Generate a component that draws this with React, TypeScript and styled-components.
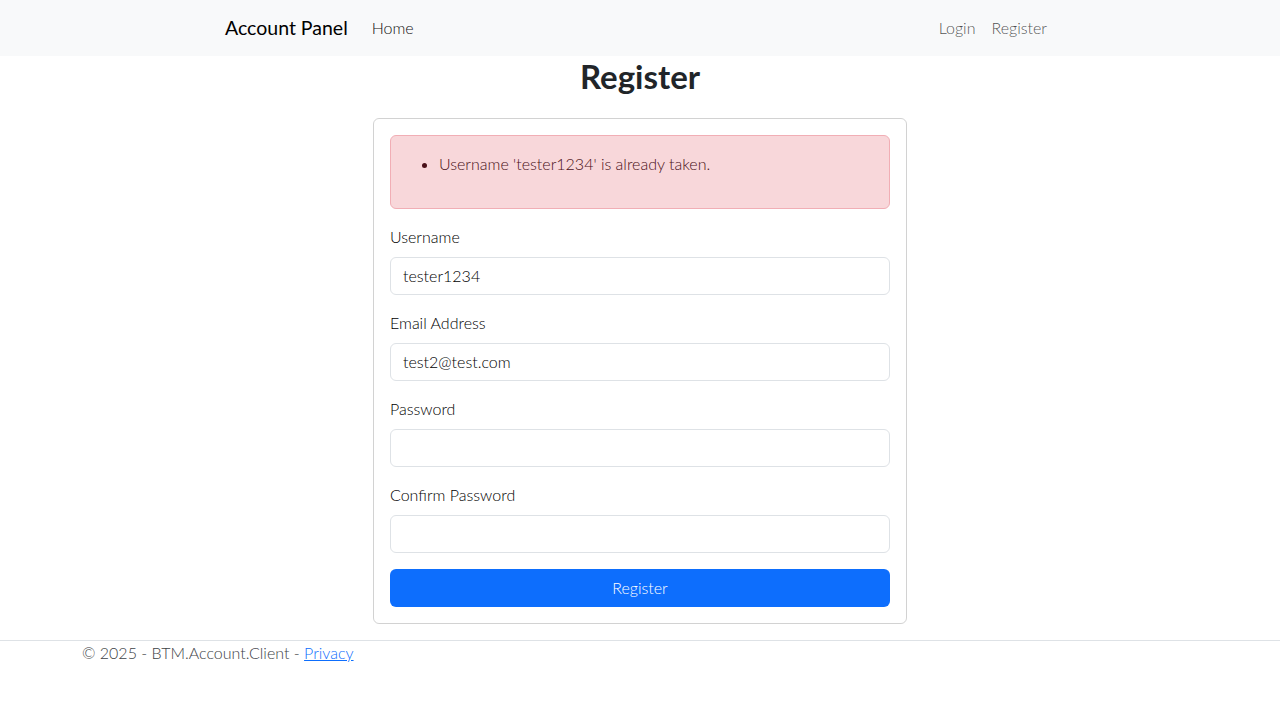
import React from "react";
import styled, { createGlobalStyle } from "styled-components";

const FONT = `"Lato", "Open Sans", "Liberation Sans", sans-serif`;

const Global = createGlobalStyle`
  html, body { margin: 0; padding: 0; background: #fff; }
  body {
    font-family: ${FONT};
    font-size: 16px;
    line-height: 1.5;
    color: #212529;
    font-weight: 400;
  }
  * { box-sizing: border-box; }
`;

const NavBar = styled.nav`
  background: #f8f9fa;
  height: 56px;
  display: flex;
  align-items: center;
`;

const NavInner = styled.div`
  width: 854px;
  margin: 0 auto;
  padding: 0 12px;
  display: flex;
  align-items: center;
`;

const Brand = styled.a`
  font-size: 19.5px;
  font-weight: 400;
  color: #000;
  text-decoration: none;
  margin-right: 16px;
  line-height: 30px;
`;

const NavList = styled.div<{ $end?: boolean }>`
  display: flex;
  margin-left: ${(p) => (p.$end ? "auto" : "0")};
`;

const NavLink = styled.a<{ $dark?: boolean }>`
  padding: 8px;
  color: ${(p) => (p.$dark ? "#111" : "rgba(0,0,0,0.7)")};
  text-decoration: none;
  font-size: 16px;
  font-weight: 300;
`;

const Main = styled.main`
  display: flex;
  flex-direction: column;
  align-items: center;
`;

const Title = styled.h1`
  font-size: 33px;
  font-weight: 700;
  line-height: 1.2;
  margin: 1px 0 21px;
  color: #212529;
`;

const Card = styled.div`
  width: 534px;
  border: 1px solid rgba(0, 0, 0, 0.175);
  border-radius: 6px;
  padding: 16px;
  margin-bottom: 16px;
`;

const Alert = styled.div`
  background: #f8d7da;
  border: 1px solid #f1aeb5;
  color: #4a1018;
  border-radius: 6px;
  padding: 16px;
  margin-bottom: 16px;
  font-weight: 300;
`;

const ErrorList = styled.ul`
  margin: 0 0 16px;
  padding-left: 32px;
`;

const Field = styled.div`
  margin-bottom: 16px;
`;

const Label = styled.label`
  display: block;
  margin-bottom: 8px;
  font-weight: 300;
  color: #000;
`;

const Input = styled.input`
  display: block;
  width: 100%;
  height: 38px;
  padding: 6px 12px;
  font-family: ${FONT};
  font-size: 16px;
  font-weight: 300;
  color: #000;
  border: 1px solid #dee2e6;
  border-radius: 6px;
  outline: none;
  background: #fff;
`;

const Button = styled.button`
  display: block;
  width: 100%;
  height: 38px;
  border: none;
  border-radius: 6px;
  background: #0d6efd;
  color: #fff;
  font-family: ${FONT};
  font-size: 16px;
  font-weight: 300;
`;

const Footer = styled.footer`
  border-top: 1px solid #dee2e6;
  color: #3d4246;
  font-weight: 300;
`;

const FooterInner = styled.div`
  width: 1140px;
  margin: 0 auto;
  padding: 0 12px;
  line-height: 24px;
`;

const FooterLink = styled.a`
  color: #0d6efd;
  text-decoration: underline;
`;

export default function App() {
  return (
    <>
      <Global />
      <NavBar>
        <NavInner>
          <Brand href="#">Account Panel</Brand>
          <NavList>
            <NavLink $dark href="#">Home</NavLink>
          </NavList>
          <NavList $end>
            <NavLink href="#">Login</NavLink>
            <NavLink href="#">Register</NavLink>
          </NavList>
        </NavInner>
      </NavBar>
      <Main>
        <Title>Register</Title>
        <Card>
          <Alert>
            <ErrorList>
              <li>Username 'tester1234' is already taken.</li>
            </ErrorList>
          </Alert>
          <Field>
            <Label>Username</Label>
            <Input defaultValue="tester1234" />
          </Field>
          <Field>
            <Label>Email Address</Label>
            <Input defaultValue="test2@test.com" />
          </Field>
          <Field>
            <Label>Password</Label>
            <Input type="password" />
          </Field>
          <Field>
            <Label>Confirm Password</Label>
            <Input type="password" />
          </Field>
          <Button>Register</Button>
        </Card>
      </Main>
      <Footer>
        <FooterInner>
          © 2025 - BTM.Account.Client - <FooterLink href="#">Privacy</FooterLink>
        </FooterInner>
      </Footer>
    </>
  );
}
